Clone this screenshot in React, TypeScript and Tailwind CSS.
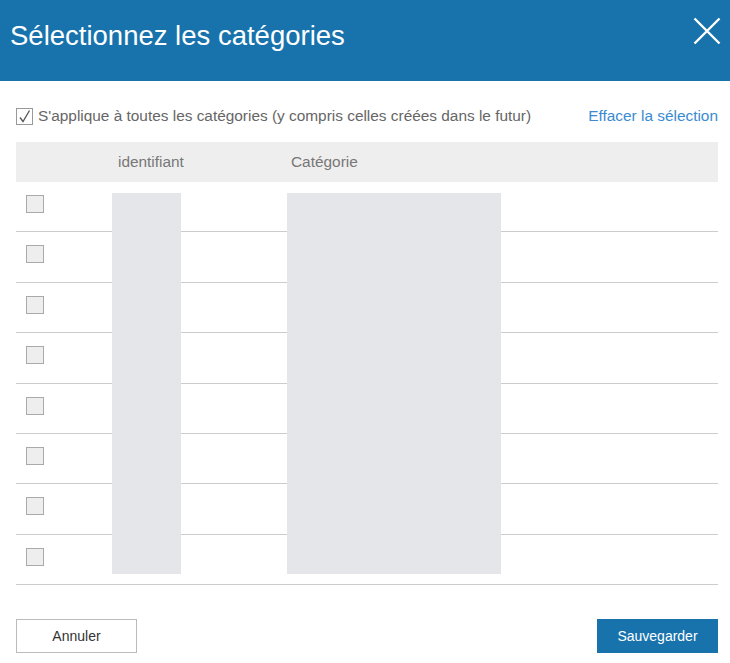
const ROWS = Array.from({ length: 8 }, (_, i) => i)

const FONT = { fontFamily: '"Liberation Sans", Arial, sans-serif' }

function CloseIcon() {
  return (
    <svg width="28" height="28" viewBox="0 0 28 28" fill="none">
      <path d="M1.5 1.5 L26.5 26.5 M26.5 1.5 L1.5 26.5" stroke="white" strokeWidth="2.4" />
    </svg>
  )
}

/** Modale de sélection des catégories. */
export default function App() {
  return (
    <div className="w-[730px] h-[663px] bg-white overflow-hidden" style={FONT}>
      <header className="h-[81px] bg-[#1873ad] flex items-start justify-between pl-[10px] pr-[9px]">
        <h1 className="text-[27.5px] text-white leading-none mt-[22px]">Sélectionnez les catégories</h1>
        <button type="button" aria-label="Fermer" className="mt-[17px]">
          <CloseIcon />
        </button>
      </header>

      <div className="pl-4 pr-3">
        <div className="flex items-center justify-between mt-[26px] h-[18px]">
          <label className="flex items-center gap-[5px] text-[15.4px] text-[#666]">
            <span className="w-[17px] h-[17px] border border-[#999] flex items-center justify-center bg-white">
              <svg width="13" height="13" viewBox="0 0 13 13" fill="none">
                <path d="M2 7.5 L5 11.5 L11.5 0.5" stroke="#555" strokeWidth="1.3" />
              </svg>
            </span>
            S'applique à toutes les catégories (y compris celles créées dans le futur)
          </label>
          <a href="#" className="text-[15.4px] text-[#3a8bd2]">
            Effacer la sélection
          </a>
        </div>

        <div className="mt-[17px]">
          <div className="h-10 bg-[#eeeeee] flex items-center text-[15.4px] text-[#777]">
            <div className="w-[96px]" />
            <div className="w-[175px] pl-[6px]">identifiant</div>
            <div className="pl-[4px]">Catégorie</div>
          </div>

          <div className="relative">
            {ROWS.map((i) => (
              <div key={i} className="h-[50.4px] border-b border-[#cccccc] flex items-start pl-[10px] pt-[13px]">
                <span className="w-[18px] h-[18px] border border-[#aaa] bg-[#eeeeee]" />
              </div>
            ))}
            <div className="absolute top-[11px] bottom-[11px] left-[96px] w-[69px] bg-[#e5e6ea]" />
            <div className="absolute top-[11px] bottom-[11px] left-[271px] w-[214px] bg-[#e5e6ea]" />
          </div>
        </div>

        <div className="flex justify-between mt-[34px]">
          <button type="button" className="w-[121px] h-[34px] border border-[#bbb] text-[14px] text-[#333] bg-white">
            Annuler
          </button>
          <button type="button" className="w-[121px] h-[34px] bg-[#1873ad] text-[14px] text-white">
            Sauvegarder
          </button>
        </div>
      </div>
    </div>
  )
}
